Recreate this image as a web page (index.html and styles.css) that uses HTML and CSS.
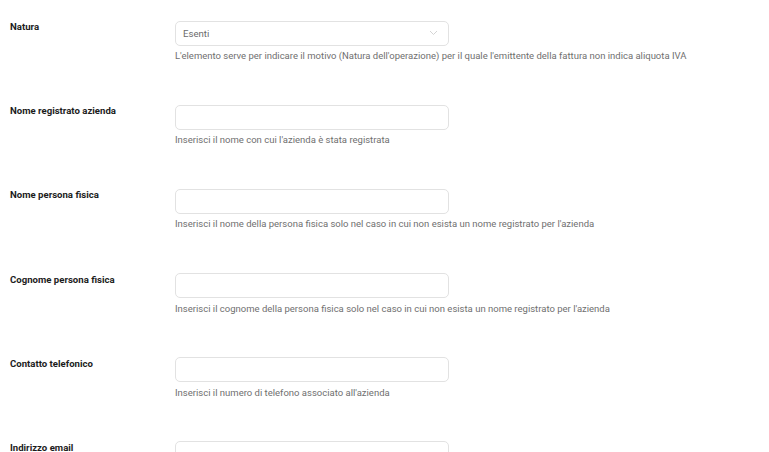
FILE: index.html
```html
<!DOCTYPE html>
<html lang="it">
<head>
<meta charset="utf-8">
<title>Dati cliente</title>
<link rel="stylesheet" href="styles.css">
</head>
<body>
<form class="form">
  <div class="row">
    <label class="label">Natura</label>
    <div class="field">
      <div class="select">
        <span class="select-value">Esenti</span>
        <svg class="chevron" width="9" height="6" viewBox="0 0 9 6"><path d="M1 1l3.5 3.5L8 1" fill="none" stroke="#cfcfcf" stroke-width="0.9"/></svg>
      </div>
      <p class="help">L'elemento serve per indicare il motivo (Natura dell'operazione) per il quale l'emittente della fattura non indica aliquota IVA</p>
    </div>
  </div>
  <div class="row">
    <label class="label">Nome registrato azienda</label>
    <div class="field">
      <div class="input"></div>
      <p class="help">Inserisci il nome con cui l'azienda è stata registrata</p>
    </div>
  </div>
  <div class="row">
    <label class="label">Nome persona fisica</label>
    <div class="field">
      <div class="input"></div>
      <p class="help">Inserisci il nome della persona fisica solo nel caso in cui non esista un nome registrato per l'azienda</p>
    </div>
  </div>
  <div class="row">
    <label class="label">Cognome persona fisica</label>
    <div class="field">
      <div class="input"></div>
      <p class="help">Inserisci il cognome della persona fisica solo nel caso in cui non esista un nome registrato per l'azienda</p>
    </div>
  </div>
  <div class="row">
    <label class="label">Contatto telefonico</label>
    <div class="field">
      <div class="input"></div>
      <p class="help">Inserisci il numero di telefono associato all'azienda</p>
    </div>
  </div>
  <div class="row">
    <label class="label">Indirizzo email</label>
    <div class="field">
      <div class="input"></div>
    </div>
  </div>
</form>
</body>
</html>
```
FILE: styles.css
```css
html, body {
  margin: 0;
  padding: 0;
  background: #ffffff;
}
body {
  font-family: Roboto, "Liberation Sans", sans-serif;
  color: #222222;
  overflow: hidden;
}
.form {
  display: flex;
  flex-direction: column;
  padding: 20.5px 0 0 10px;
  gap: 28.2px;
}
.row {
  display: flex;
  align-items: flex-start;
}
.label {
  width: 165px;
  flex: none;
  font-size: 9.6px;
  font-weight: 700;
  line-height: 12px;
  padding-top: 0.5px;
  color: #1c1c1c;
}
.field {
  display: flex;
  flex-direction: column;
}
.select, .input {
  box-sizing: border-box;
  width: 274px;
  height: 25px;
  border: 1px solid #e2e2e2;
  border-radius: 5px;
  background: #fff;
}
.select {
  display: flex;
  align-items: center;
  justify-content: space-between;
  padding: 0 10px 0 7px;
}
.select-value {
  font-size: 9.6px;
  color: #6b6b6b;
}
.help {
  margin: 0;
  padding-top: 4.5px;
  font-size: 9.5px;
  line-height: 12px;
  color: #6f6f6f;
  height: 26.5px;
}
```
